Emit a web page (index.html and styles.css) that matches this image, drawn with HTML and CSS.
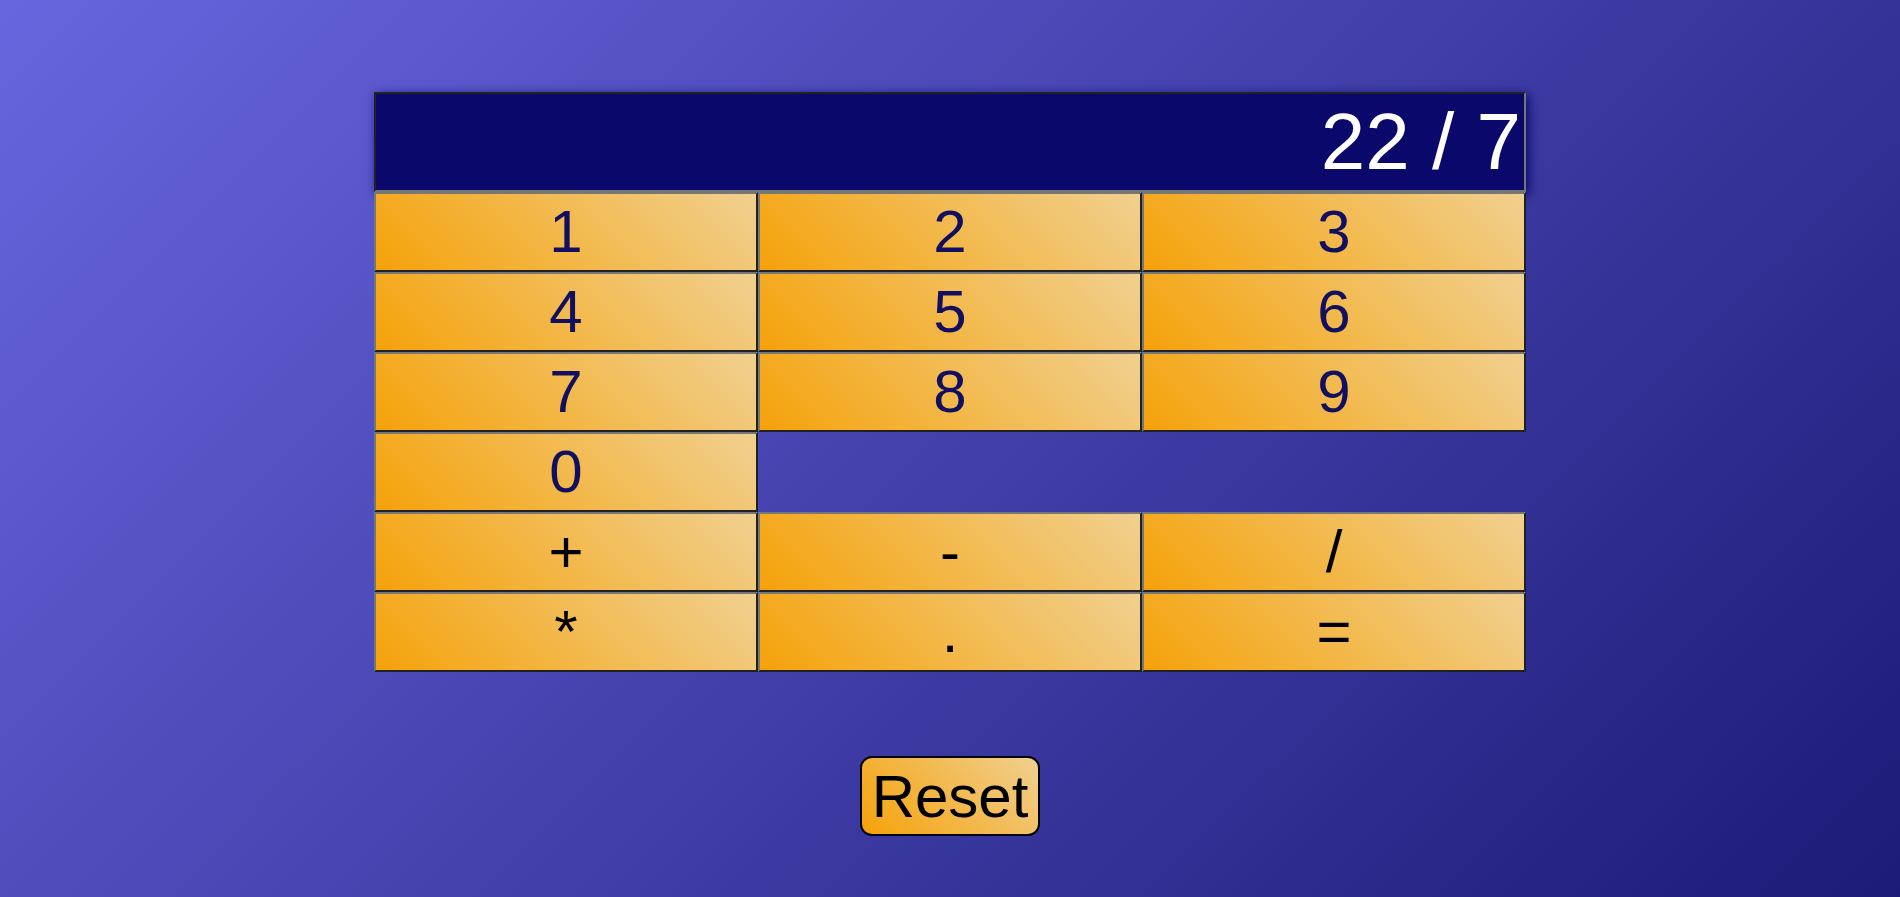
FILE: index.html
```html
<!DOCTYPE html>
<html lang="en">
<head>
<meta charset="utf-8">
<meta name="viewport" content="width=device-width, initial-scale=1">
<title>Calculator</title>
<link rel="stylesheet" href="styles.css">
</head>
<body>
<main class="calculator">
  <input class="display" type="text" value="22 / 7" aria-label="Display" readonly>
  <div class="keys">
    <button class="key digit" type="button">1</button>
    <button class="key digit" type="button">2</button>
    <button class="key digit" type="button">3</button>
    <button class="key digit" type="button">4</button>
    <button class="key digit" type="button">5</button>
    <button class="key digit" type="button">6</button>
    <button class="key digit" type="button">7</button>
    <button class="key digit" type="button">8</button>
    <button class="key digit" type="button">9</button>
    <button class="key digit" type="button">0</button>
    <button class="key row-start" type="button">+</button>
    <button class="key" type="button">-</button>
    <button class="key" type="button">/</button>
    <button class="key" type="button">*</button>
    <button class="key" type="button">.</button>
    <button class="key" type="button">=</button>
  </div>
  <button class="reset" type="button">Reset</button>
</main>
</body>
</html>
```

FILE: styles.css
```css
* {
  box-sizing: border-box;
}

body {
  margin: 0;
  min-height: 100vh;
  background: linear-gradient(135deg, #6866de, #1c1b77);
  font-family: "Liberation Sans", Arial, sans-serif;
}

.calculator {
  display: flex;
  flex-direction: column;
  align-items: center;
  max-width: 1152px;
  margin: 0 auto;
  padding-top: 92px;
}

.display {
  width: 100%;
  height: 100px;
  padding: 0 3px;
  border: 2px solid;
  border-color: #212121 #767676 #767676 #212121;
  border-radius: 0;
  background: #0a096b;
  box-shadow: 3px 3px 10px #0a096b;
  color: #fff;
  font: inherit;
  font-size: 80px;
  text-align: right;
  outline: none;
}

.keys {
  display: grid;
  grid-template-columns: repeat(3, 1fr);
  grid-auto-rows: 80px;
  width: 100%;
  isolation: isolate;
}

.key,
.reset {
  padding: 0 10px 2px;
  border: 2px solid;
  border-color: #767676 #212121 #212121 #767676;
  background: linear-gradient(45deg, #f5a20a, #f0d090);
  color: #000;
  font: inherit;
  font-size: 60px;
  cursor: pointer;
}

.key.digit {
  color: #100f60;
}

.row-start {
  grid-column: 1;
}

.reset {
  height: 80px;
  margin-top: 84px;
  padding-bottom: 0;
  border-color: #000;
  border-radius: 12px;
}
```
